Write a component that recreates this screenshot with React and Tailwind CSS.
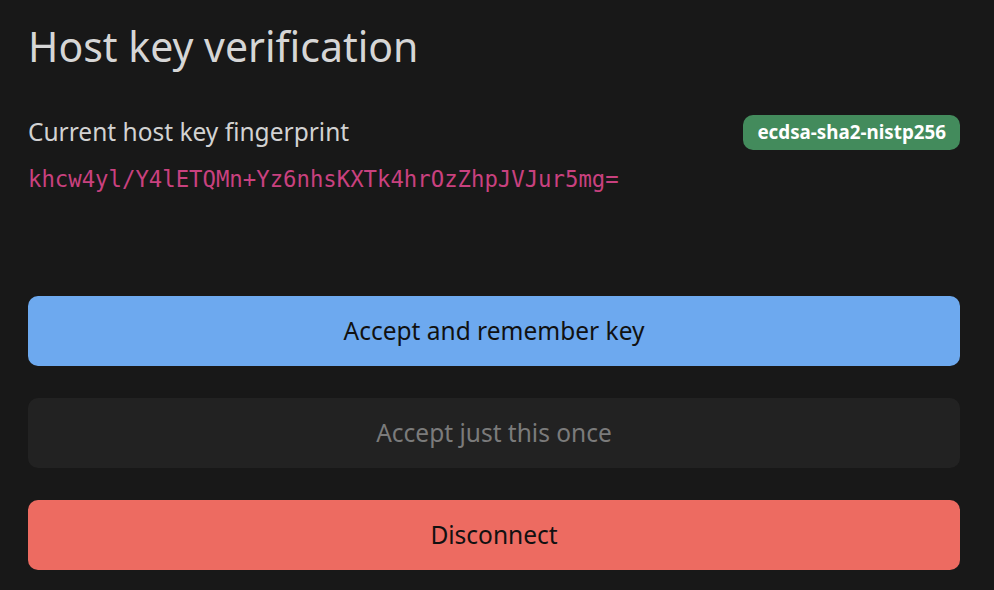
export default function App() {
  const sans = { fontFamily: '"Noto Sans", sans-serif' };
  return (
    <div
      className="w-full min-h-screen bg-[#181818] pl-[28px] pr-[34px] pt-[20px] pb-[20px]"
      style={sans}
    >
      <h1 className="text-[41px] leading-[52px] text-[#d6d6d6] font-normal">
        Host key verification
      </h1>
      <div className="mt-[43px] flex items-center justify-between h-[35px]">
        <span className="text-[24.5px] text-[#d2d2d2]">Current host key fingerprint</span>
        <span className="h-[35px] flex items-center px-[14px] rounded-[10px] bg-[#438b5c] text-white font-bold text-[18.8px]">
          ecdsa-sha2-nistp256
        </span>
      </div>
      <div
        className="mt-[15px] text-[22.3px] leading-[28px] text-[#c9417f]"
        style={{ fontFamily: '"DejaVu Sans Mono", monospace' }}
      >
        khcw4yl/Y4lETQMn+Yz6nhsKXTk4hrOzZhpJVJur5mg=
      </div>
      <div className="mt-[103px] flex flex-col gap-[32px]">
        <button className="h-[70px] w-full rounded-[10px] bg-[#6da9ef] text-[#111] text-[24.5px]">
          Accept and remember key
        </button>
        <button className="h-[70px] w-full rounded-[10px] bg-[#222222] text-[#7b7b7b] text-[24.5px]">
          Accept just this once
        </button>
        <button className="h-[70px] w-full rounded-[10px] bg-[#ed6b61] text-[#111] text-[24.5px]">
          Disconnect
        </button>
      </div>
    </div>
  );
}
